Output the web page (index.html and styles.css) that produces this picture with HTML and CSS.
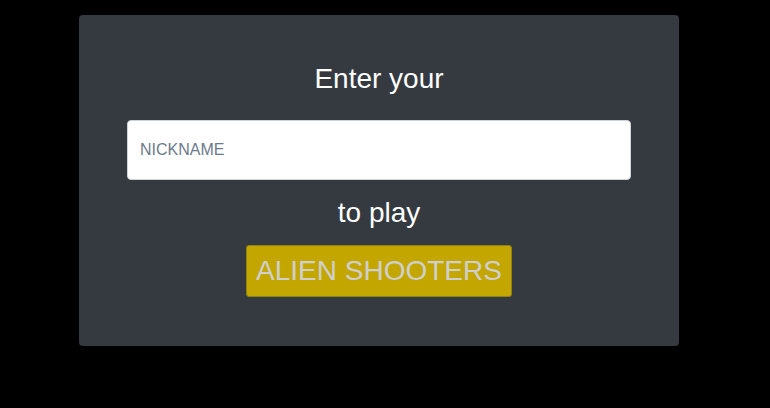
FILE: index.html
```html
<!DOCTYPE html>
<html>
<head>
<meta charset="utf-8">
<link rel="stylesheet" href="styles.css">
</head>
<body>
<div class="page">
  <div class="card">
    <div class="line">Enter your</div>
    <input class="nick" type="text" placeholder="NICKNAME">
    <div class="line">to play</div>
    <button class="play">ALIEN SHOOTERS</button>
  </div>
</div>
</body>
</html>
```
FILE: styles.css
```css
html, body {
  margin: 0;
  padding: 0;
  background: #000;
  height: 100%;
}
.page {
  padding: 15px 0 0 79px;
}
.card {
  box-sizing: border-box;
  width: 600px;
  height: 331px;
  background: #343a40;
  border-radius: 4px;
  padding: 48px 48px 0 48px;
  display: flex;
  flex-direction: column;
  align-items: center;
  font-family: "Liberation Sans", Arial, sans-serif;
}
.line {
  color: #fff;
  font-size: 28px;
  line-height: 32px;
}
.nick {
  box-sizing: border-box;
  width: 100%;
  height: 60px;
  margin-top: 25px;
  border: 1px solid #ced4da;
  border-radius: 4px;
  padding: 0 12px;
  font-family: "Liberation Sans", Arial, sans-serif;
  font-size: 16px;
  color: #495057;
  background: #fff;
  outline: none;
}
.nick::placeholder {
  color: #6c7a8d;
  opacity: 1;
}
.nick + .line {
  margin-top: 17px;
}
.play {
  margin-top: 16px;
  height: 52px;
  padding: 0 9px;
  background: #c3a700;
  border: 1px solid #8f820f;
  border-radius: 3px;
  color: #cfcfcf;
  font-family: "Liberation Sans", Arial, sans-serif;
  font-size: 28px;
  line-height: 32px;
}
```
